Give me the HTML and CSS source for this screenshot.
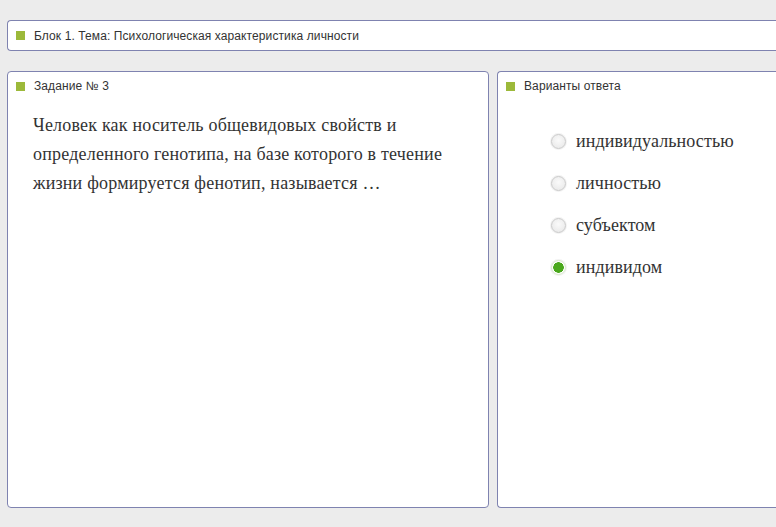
FILE: index.html
```html
<!DOCTYPE html>
<html lang="ru">
<head>
    <meta charset="UTF-8">
    <title>Тест</title>
    <link rel="stylesheet" href="styles.css">
</head>
<body>
<div class="page">
    <div class="block-bar">
        <span class="mark"></span>
        <span class="caption">Блок 1. Тема: Психологическая характеристика личности</span>
    </div>

    <div class="row">
        <div class="panel task">
            <div class="panel-head">
                <span class="mark"></span>
                <span class="caption">Задание № 3</span>
            </div>
            <div class="question">
                Человек как носитель общевидовых свойств и определенного генотипа, на базе которого в течение жизни формируется фенотип, называется …
            </div>
        </div>

        <div class="panel answers">
            <div class="panel-head">
                <span class="mark"></span>
                <span class="caption">Варианты ответа</span>
            </div>
            <ul class="options">
                <li><span class="radio"></span>индивидуальностью</li>
                <li><span class="radio"></span>личностью</li>
                <li><span class="radio"></span>субъектом</li>
                <li><span class="radio checked"></span>индивидом</li>
            </ul>
        </div>
    </div>
</div>
</body>
</html>
```

FILE: styles.css
```css
html, body, div, ul, li, span {
    margin: 0;
    padding: 0;
}
html, body {
    width: 100%;
    height: 100%;
    overflow: hidden;
}
body {
    background-color: #ececec;
    font-family: "Liberation Sans", Arial, sans-serif;
    color: #333;
}
.page {
    padding: 20px 0 0 7px;
}
/* bars on the right are cut by the window edge, so no right border */
.block-bar {
    display: flex;
    align-items: center;
    height: 29px;
    padding-left: 8px;
    background-color: #fff;
    border: 1px solid #7f83b0;
    border-right: none;
    border-radius: 4px 0 0 4px;
}
.mark {
    display: inline-block;
    width: 9px;
    height: 9px;
    background-color: #9cb93a;
    margin-right: 9px;
}
.caption {
    font-size: 12px;
    letter-spacing: 0.1px;
    color: #333;
}
.row {
    display: flex;
    gap: 8px;
    margin-top: 20px;
}
.panel {
    height: 435px;
    background-color: #fff;
    border: 1px solid #7f83b0;
    border-radius: 4px;
}
.task {
    width: 480px;
}
.answers {
    flex: 1;
    border-right: none;
    border-radius: 4px 0 0 4px;
}
.panel-head {
    display: flex;
    align-items: center;
    padding: 8px 0 0 8px;
    height: 12px;
}
.question {
    padding: 19px 30px 0 25px;
    font-family: "Liberation Serif", "Times New Roman", serif;
    font-size: 18px;
    letter-spacing: 0.2px;
    line-height: 29px;
    color: #333;
}
.options {
    list-style-type: none;
    padding: 28px 0 0 53px;
}
.options li {
    display: flex;
    align-items: center;
    height: 42px;
    font-family: "Liberation Serif", "Times New Roman", serif;
    font-size: 18px;
    letter-spacing: 0.1px;
    color: #333;
}
.radio {
    display: inline-block;
    box-sizing: border-box;
    width: 15px;
    height: 15px;
    margin-right: 10px;
    border-radius: 50%;
    border: 1px solid #c9c9c9;
    background: radial-gradient(circle at 50% 40%, #fafafa 0, #e6e6e6 100%);
    box-shadow: 0 0 0 1px #f2f2f2;
}
.radio.checked {
    border: 1px solid #d6e6c8;
    background: radial-gradient(circle, #4aa81c 0, #4aa81c 5px, #fff 5.5px);
}
```
